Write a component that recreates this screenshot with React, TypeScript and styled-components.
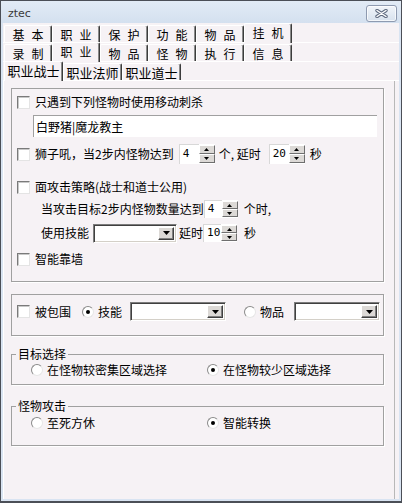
import styled, { createGlobalStyle } from "styled-components";

const GlobalStyle = createGlobalStyle`
  body {
    margin: 0;
    background: #ffffff;
    font-family: "Noto Sans CJK SC", "Liberation Sans", sans-serif;
    font-size: 12px;
    color: #000;
  }
  * { box-sizing: border-box; }
`;

const topTabs = ["基本", "职业", "保护", "功能", "物品", "挂机"];
const subTabs = ["录制", "职业", "物品", "怪物", "执行", "信息"];
const jobTabs = ["职业战士", "职业法师", "职业道士"];

const SpinArrows = ({ h }: { h: number }) => (
  <SpinButtons $h={h}>
    <SpinBtn>
      <svg width="5" height="3" viewBox="0 0 5 3">
        <path d="M2.5 0 L5 3 L0 3 Z" fill="#000" />
      </svg>
    </SpinBtn>
    <SpinBtn>
      <svg width="5" height="3" viewBox="0 0 5 3">
        <path d="M0 0 L5 0 L2.5 3 Z" fill="#000" />
      </svg>
    </SpinBtn>
  </SpinButtons>
);

const Spin = ({ value, w, h }: { value: string; w: number; h: number }) => (
  <SpinWrap>
    <SpinField $w={w} $h={h}>{value}</SpinField>
    <SpinArrows h={h} />
  </SpinWrap>
);

const Combo = ({ w }: { w: number }) => (
  <ComboBox $w={w}>
    <ComboBtn>
      <svg width="7" height="4" viewBox="0 0 7 4">
        <path d="M0 0 L7 0 L3.5 4 Z" fill="#000" />
      </svg>
    </ComboBtn>
  </ComboBox>
);

const App = () => {
  return (
    <>
      <GlobalStyle />
      <Window>
        <TitleBar>
          <Title>ztec</Title>
          <CloseButton>
            <svg width="13" height="9" viewBox="0 0 13 9">
              <path d="M2 1.5 L11 7.5 M11 1.5 L2 7.5" stroke="#5f6b80" strokeWidth="3.4" strokeLinecap="round" />
              <path d="M2 1.5 L11 7.5 M11 1.5 L2 7.5" stroke="#ffffff" strokeWidth="1.4" strokeLinecap="round" />
            </svg>
          </CloseButton>
        </TitleBar>
        <Body>
          <TabRow>
            {topTabs.map((t) => (
              <Tab key={t} $w={48} $active={t === "挂机"} $spaced>
                {t}
              </Tab>
            ))}
          </TabRow>
          <TabRow>
            {subTabs.map((t) => (
              <Tab key={t} $w={48} $active={t === "职业"} $spaced>
                {t}
              </Tab>
            ))}
          </TabRow>
          <TabRow>
            {jobTabs.map((t) => (
              <Tab key={t} $w={59} $active={t === "职业战士"} $big>
                {t}
              </Tab>
            ))}
          </TabRow>
          <Page>
            <Group $top={7} $h={194}>
              <Row $top={6}>
                <Check />
                <Label>只遇到下列怪物时使用移动刺杀</Label>
              </Row>
              <TextField>白野猪|魔龙教主</TextField>
              <Row $top={7} $h={20}>
                <Check />
                <Label>狮子吼，当2步内怪物达到</Label>
                <Gap $w={5} />
                <Spin value="4" w={20} h={20} />
                <Gap $w={4} />
                <Label>个, 延时</Label>
                <Gap $w={8} />
                <Spin value="20" w={20} h={20} />
                <Gap $w={5} />
                <Label>秒</Label>
              </Row>
              <Row $top={16}>
                <Check />
                <Label>面攻击策略(战士和道士公用)</Label>
              </Row>
              <Row $top={6} $h={18} $indent={24}>
                <Label>当攻击目标2步内怪物数量达到</Label>
                <Spin value="4" w={18} h={18} />
                <Gap $w={6} />
                <Label>个时,</Label>
              </Row>
              <Row $top={6} $h={18} $indent={24}>
                <Label>使用技能</Label>
                <Gap $w={4} />
                <Combo w={84} />
                <Gap $w={2} />
                <Label>延时</Label>
                <Spin value="10" w={18} h={18} />
                <Gap $w={7} />
                <Label>秒</Label>
              </Row>
              <Row $top={10}>
                <Check />
                <Label>智能靠墙</Label>
              </Row>
            </Group>

            <Group $top={12} $h={42}>
              <Row $top={7} $h={19}>
                <Check />
                <Label>被包围</Label>
                <Gap $w={11} />
                <Radio $on />
                <Label>技能</Label>
                <Gap $w={8} />
                <Combo w={96} />
                <Gap $w={18} />
                <Radio />
                <Label>物品</Label>
                <Gap $w={10} />
                <Combo w={86} />
              </Row>
            </Group>

            <Group $top={18} $h={31}>
              <Legend>目标选择</Legend>
              <Row $top={8} $indent={14}>
                <Option>
                  <Radio />
                  <Label>在怪物较密集区域选择</Label>
                </Option>
                <Option>
                  <Radio $on />
                  <Label>在怪物较少区域选择</Label>
                </Option>
              </Row>
            </Group>

            <Group $top={21} $h={40}>
              <Legend>怪物攻击</Legend>
              <Row $top={9} $indent={14}>
                <Option>
                  <Radio />
                  <Label>至死方休</Label>
                </Option>
                <Option>
                  <Radio $on />
                  <Label>智能转换</Label>
                </Option>
              </Row>
            </Group>
          </Page>
        </Body>
      </Window>
    </>
  );
};

export default App;

const Window = styled.div`
  width: 402px;
  height: 503px;
  border: 1px solid #4b4f57;
  border-bottom-width: 2px;
  background: #d9e4f2;
  display: flex;
  flex-direction: column;
`;

const TitleBar = styled.div`
  height: 22px;
  display: flex;
  align-items: center;
  justify-content: space-between;
  padding: 0 4px 0 7px;
  background: linear-gradient(#e2ebf6, #d4e0ef);
`;

const Title = styled.div`
  font-family: "DejaVu Sans", "Liberation Sans", sans-serif;
  font-size: 11px;
  color: #3a3a3a;
  margin-top: 2px;
`;

const CloseButton = styled.div`
  width: 31px;
  height: 17px;
  margin-top: 3px;
  border: 1px solid #8e9ab0;
  border-radius: 3px;
  background: linear-gradient(#f1f5fa, #d8e2ee);
  box-shadow: inset 0 0 0 1px rgba(255, 255, 255, 0.7);
  display: flex;
  align-items: center;
  justify-content: center;
`;

const Body = styled.div`
  flex: 1;
  margin: 0 2px 2px 2px;
  background: #f6f2f5;
  padding-top: 1px;
  display: flex;
  flex-direction: column;
`;

const TabRow = styled.div`
  height: 19px;
  display: flex;
  align-items: flex-end;
  padding-left: 1px;
  border-bottom: 1px solid #ffffff;
  &:first-child {
    height: 19px;
  }
`;

const Tab = styled.div<{ $w: number; $active?: boolean; $spaced?: boolean; $big?: boolean }>`
  width: ${(p) => p.$w}px;
  height: ${(p) => (p.$active ? 20 : 17)}px;
  margin-bottom: ${(p) => (p.$active ? -1 : 0)}px;
  position: relative;
  z-index: ${(p) => (p.$active ? 1 : 0)};
  background: #f6f2f5;
  border-top: 1px solid #ffffff;
  border-left: 1px solid #ffffff;
  border-right: 1px solid #3c3c3c;
  box-shadow: inset -1px 0 #8a8a8a;
  border-radius: 2px 2px 0 0;
  display: flex;
  align-items: ${(p) => (p.$active ? "flex-start" : "center")};
  padding-top: ${(p) => (p.$active ? 1 : 0)}px;
  justify-content: center;
  font-size: ${(p) => (p.$big ? 13 : 12)}px;
  line-height: 15px;
  letter-spacing: ${(p) => (p.$spaced ? 7 : 0)}px;
  text-indent: ${(p) => (p.$spaced ? 7 : 0)}px;
  white-space: nowrap;
`;

const Page = styled.div`
  flex: 1;
  border-left: 1px solid #ffffff;
  border-right: 1px solid #b8b8b8;
  margin-right: 4px;
  padding-left: 7px;
  display: flex;
  flex-direction: column;
`;

const Group = styled.div<{ $top: number; $h: number }>`
  position: relative;
  width: 373px;
  height: ${(p) => p.$h}px;
  margin-top: ${(p) => p.$top}px;
  border: 1px solid #a0a0a0;
  box-shadow: 1px 1px 0 #ffffff;
  padding-left: 5px;
  display: flex;
  flex-direction: column;
`;

const Legend = styled.div`
  position: absolute;
  top: -9px;
  left: 4px;
  padding: 0 2px;
  background: #f6f2f5;
  line-height: 16px;
`;

const Row = styled.div<{ $top: number; $h?: number; $indent?: number }>`
  display: flex;
  align-items: center;
  height: ${(p) => p.$h ?? 14}px;
  margin-top: ${(p) => p.$top}px;
  padding-left: ${(p) => p.$indent ?? 0}px;
  white-space: nowrap;
`;

const Option = styled.div`
  width: 194px;
  display: flex;
  align-items: center;
`;

const Label = styled.span`
  line-height: 14px;
`;

const Gap = styled.span<{ $w: number }>`
  display: inline-block;
  width: ${(p) => p.$w}px;
  flex-shrink: 0;
`;

const Check = styled.span`
  width: 13px;
  height: 13px;
  flex-shrink: 0;
  margin-right: 5px;
  background: #ffffff;
  border: 1px solid;
  border-color: #7a7a7a #e4e4e4 #e4e4e4 #7a7a7a;
  box-shadow: inset 1px 1px #c8c8c8;
`;

const Radio = styled.span<{ $on?: boolean }>`
  width: 12px;
  height: 12px;
  flex-shrink: 0;
  margin-right: 4px;
  border-radius: 50%;
  background: #ffffff;
  border: 1px solid;
  border-color: #8a8a8a #e6e6e6 #e6e6e6 #8a8a8a;
  display: flex;
  align-items: center;
  justify-content: center;
  &::after {
    content: "";
    width: 4px;
    height: 4px;
    border-radius: 50%;
    background: ${(p) => (p.$on ? "#000" : "transparent")};
  }
`;

const TextField = styled.div`
  width: 344px;
  height: 22px;
  margin: 6px 0 0 16px;
  background: #ffffff;
  border-top: 1px solid #a0a0a0;
  border-left: 1px solid #a0a0a0;
  padding: 3px 0 0 2px;
  line-height: 16px;
`;

const SpinWrap = styled.div`
  display: flex;
  align-items: stretch;
`;

const SpinField = styled.div<{ $w: number; $h: number }>`
  width: ${(p) => p.$w}px;
  height: ${(p) => p.$h}px;
  background: #ffffff;
  border-top: 1px solid #d8d8d8;
  border-left: 1px solid #d8d8d8;
  font-family: "DejaVu Sans Mono", "Liberation Mono", monospace;
  font-size: 11px;
  line-height: ${(p) => p.$h - 2}px;
  padding-left: 3px;
`;

const SpinButtons = styled.div<{ $h: number }>`
  width: 16px;
  height: ${(p) => p.$h}px;
  display: flex;
  flex-direction: column;
  padding: 1px 0;
  background: #ffffff;
`;

const SpinBtn = styled.div`
  flex: 1;
  background: #dcd9d6;
  border: 1px solid;
  border-color: #ffffff #6e6e6e #6e6e6e #ffffff;
  display: flex;
  align-items: center;
  justify-content: center;
`;

const ComboBox = styled.div<{ $w: number }>`
  width: ${(p) => p.$w}px;
  height: 19px;
  flex-shrink: 0;
  background: #ffffff;
  border: 1px solid;
  border-color: #7c7c7c #ffffff #ffffff #7c7c7c;
  box-shadow: inset 1px 1px #404040, inset -1px -1px #d4d0c8;
  display: flex;
  justify-content: flex-end;
  padding: 2px;
`;

const ComboBtn = styled.div`
  width: 16px;
  background: #dcd9d6;
  border: 1px solid;
  border-color: #ffffff #404040 #404040 #ffffff;
  box-shadow: inset -1px -1px #808080;
  display: flex;
  align-items: center;
  justify-content: center;
`;
